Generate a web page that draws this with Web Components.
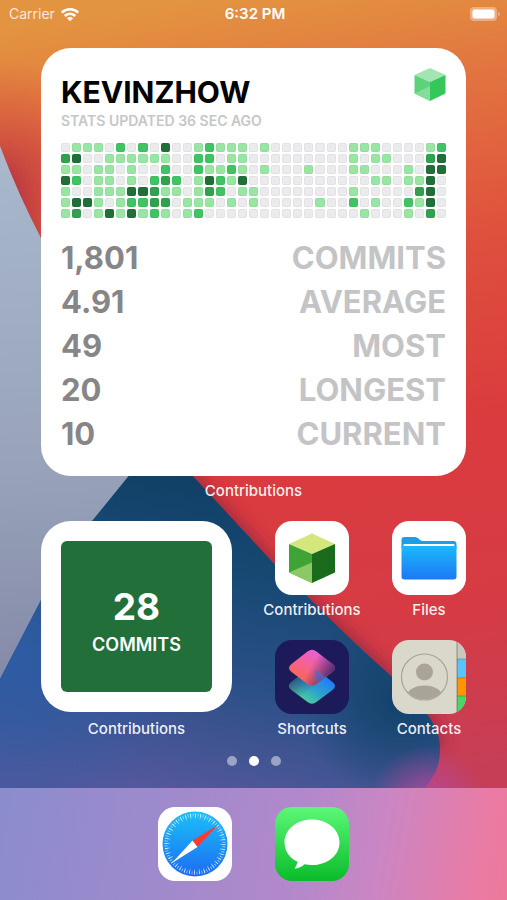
<!DOCTYPE html>
<html lang="en">
<head>
<meta charset="utf-8">
<meta name="viewport" content="width=device-width, initial-scale=1">
<title>Home screen</title>
<style>
html, body {
  margin: 0;
  min-height: 100%;
  font-family: Inter, "Liberation Sans", sans-serif;
}
</style>
</head>
<body>

<home-screen>
  <wall-paper slot="wallpaper"></wall-paper>
  <status-bar slot="status" carrier="Carrier" time="6:32 PM"></status-bar>

  <home-widget size="large" label="Contributions">
    <contribution-stats user="KEVINZHOW" updated="STATS UPDATED 36 SEC AGO">
      <stat-row value="1,801">COMMITS</stat-row>
      <stat-row value="4.91">AVERAGE</stat-row>
      <stat-row value="49">MOST</stat-row>
      <stat-row value="20">LONGEST</stat-row>
      <stat-row value="10">CURRENT</stat-row>
    </contribution-stats>
  </home-widget>

  <home-widget size="small" label="Contributions">
    <commit-count value="28">COMMITS</commit-count>
  </home-widget>
  <app-icon name="contributions">Contributions</app-icon>
  <app-icon name="files">Files</app-icon>
  <app-icon name="shortcuts">Shortcuts</app-icon>
  <app-icon name="contacts">Contacts</app-icon>

  <page-dots slot="dots" count="3" current="1"></page-dots>
  <app-dock slot="dock">
    <app-icon name="safari"></app-icon>
    <app-icon name="messages"></app-icon>
  </app-dock>
</home-screen>

<script>
class HomeScreen extends HTMLElement {
  constructor() {
    super();
    this.attachShadow({mode: 'open'}).innerHTML = `
      <style>
        :host { display: grid; min-height: 100vh; overflow: hidden; }
        /* wallpaper and content share one grid cell */
        ::slotted([slot=wallpaper]), .content { grid-area: 1 / 1; min-width: 0; }
        .content { display: flex; flex-direction: column; z-index: 1; }
        main {
          flex: 1;
          display: grid;
          grid-template-columns: repeat(4, minmax(0, 1fr));
          align-content: start;
          gap: 20px 43px;
          padding: 20px 41px 16px;
        }
      </style>
      <slot name="wallpaper"></slot>
      <div class="content">
        <slot name="status"></slot>
        <main><slot></slot></main>
        <slot name="dots"></slot>
        <slot name="dock"></slot>
      </div>
    `;
  }
}

class WallPaper extends HTMLElement {
  constructor() {
    super();
    this.attachShadow({mode: 'open'}).innerHTML = `
      <style>
        :host { display: block; contain: size; overflow: hidden; }
        svg { display: block; width: 100%; height: 100%; }
      </style>
      <svg viewBox="0 0 507 900" preserveAspectRatio="none" aria-hidden="true">
        <defs>
          <linearGradient id="warm" gradientUnits="userSpaceOnUse" x1="200" y1="0" x2="330" y2="900">
            <stop offset="0" stop-color="#e39440"/>
            <stop offset=".12" stop-color="#e27440"/>
            <stop offset=".3" stop-color="#df503d"/>
            <stop offset=".5" stop-color="#da3b3e"/>
            <stop offset=".7" stop-color="#d63b44"/>
            <stop offset=".88" stop-color="#c63e56"/>
          </linearGradient>
          <radialGradient id="ember" gradientUnits="userSpaceOnUse" cx="0" cy="190" r="130">
            <stop offset="0" stop-color="#b83044" stop-opacity=".9"/>
            <stop offset="1" stop-color="#d84a3a" stop-opacity="0"/>
          </radialGradient>
          <linearGradient id="grey" gradientUnits="userSpaceOnUse" x1="0" y1="150" x2="40" y2="680">
            <stop offset="0" stop-color="#a9b8cd"/>
            <stop offset=".6" stop-color="#98a3b9"/>
            <stop offset="1" stop-color="#8489a8"/>
          </linearGradient>
          <linearGradient id="blue" gradientUnits="userSpaceOnUse" x1="270" y1="470" x2="200" y2="800">
            <stop offset="0" stop-color="#103d62"/>
            <stop offset=".3" stop-color="#164872"/>
            <stop offset=".65" stop-color="#2c5088"/>
            <stop offset="1" stop-color="#55589c"/>
          </linearGradient>
          <radialGradient id="azure" gradientUnits="userSpaceOnUse" cx="10" cy="660" r="180">
            <stop offset="0" stop-color="#2e5ca4"/>
            <stop offset="1" stop-color="#2e5ca4" stop-opacity="0"/>
          </radialGradient>
          <radialGradient id="deep" gradientUnits="userSpaceOnUse" cx="400" cy="700" r="100">
            <stop offset="0" stop-color="#12436a"/>
            <stop offset="1" stop-color="#12436a" stop-opacity="0"/>
          </radialGradient>
          <radialGradient id="pink" gradientUnits="userSpaceOnUse" cx="428" cy="805" r="60">
            <stop offset="0" stop-color="#b8479c"/>
            <stop offset="1" stop-color="#b0489a" stop-opacity="0"/>
          </radialGradient>
          <filter id="soft" x="-20%" y="-20%" width="140%" height="140%">
            <feGaussianBlur stdDeviation="8"/>
          </filter>
          <path id="wedge" d="M-6 690 L0 679 L41 600 Q66 550 92 521 L140 462 Q160 440 178 460 L278 568 C320 608 352 642 390 675 C414 697 440 722 440 748 C440 776 428 778 420 800 V900 H-6 Z"/>
        </defs>
        <rect width="507" height="900" fill="url(#warm)"/>
        <rect width="250" height="350" fill="url(#ember)"/>
        <path d="M0 146 Q18 194 42 240 L150 440 V700 H0 Z" fill="#8e2840" opacity=".3" filter="url(#soft)"/>
        <path d="M0 146 Q18 194 42 240 L150 440 V700 H0 Z" fill="url(#grey)"/>
        <path d="M170 445 L278 562 C320 602 352 636 396 675 C422 697 444 722 444 748 L300 740 Z" fill="#7e2240" opacity=".6" filter="url(#soft)"/>
        <use href="#wedge" fill="url(#blue)"/>
        <use href="#wedge" fill="url(#azure)"/>
        <use href="#wedge" fill="url(#deep)"/>
        <rect x="340" y="730" width="167" height="170" fill="url(#pink)"/>
      </svg>
    `;
  }
}

class StatusBar extends HTMLElement {
  constructor() {
    super();
    this.attachShadow({mode: 'open'}).innerHTML = `
      <style>
        :host {
          display: grid;
          grid-template-columns: 1fr auto 1fr;
          align-items: center;
          height: 28px;
          padding: 0 6px 0 9px;
          color: #fff;
          font-size: 15px;
          line-height: 28px;
        }
        .carrier { display: flex; align-items: center; gap: 5px; color: #fffc; font-size: 14px; }
        .time { font-weight: 600; }
        .battery { justify-self: end; }
        svg { display: block; }
      </style>
      <span class="carrier">${this.getAttribute('carrier')}
        <svg width="20" height="15" viewBox="0 0 20 15" fill="none" stroke="#fff" stroke-width="2.600" aria-hidden="true">
          <path d="M1.800 5.600a11.600 11.600 0 0 1 16.400 0M4.800 9a7.300 7.300 0 0 1 10.400 0"/>
          <path d="M10 14.200 6.900 11.200a4.400 4.400 0 0 1 6.200 0Z" fill="#fff" stroke="none"/>
        </svg>
      </span>
      <span class="time">${this.getAttribute('time')}</span>
      <svg class="battery" width="31" height="14" viewBox="0 0 31 14" aria-hidden="true">
        <rect width="27" height="14" rx="4" fill="#fff" fill-opacity=".35"/>
        <rect x="2.500" y="2.500" width="22" height="9" rx="2" fill="#fff"/>
        <path d="M28 5v4q2-.5 2-2t-2-2Z" fill="#fff" opacity=".35"/>
      </svg>
    `;
  }
}

class HomeWidget extends HTMLElement {
  constructor() {
    super();
    this.attachShadow({mode: 'open'}).innerHTML = `
      <style>
        :host {
          display: flex;
          flex-direction: column;
          justify-content: space-between;
          gap: 5px;
        }
        :host([size=large]) { grid-column: span 4; }
        :host([size=small]) { grid-column: span 2; grid-row: span 2; }
        .card { background: #fff; border-radius: 30px; padding: 20px; }
        :host([size=small]) .card { aspect-ratio: 1; box-sizing: border-box; display: grid; }
        .label { color: #fffe; font-size: 15px; font-weight: 500; line-height: 20px; text-align: center; }
      </style>
      <div class="card"><slot></slot></div>
      <div class="label">${this.getAttribute('label')}</div>
    `;
  }
}

class ContributionStats extends HTMLElement {
  constructor() {
    super();
    // one digit per day, 0 (no commits) to 4 (most)
    const days = [
      '01110202040012111010000000111000012',
      '34001111110022011000000000101100034',
      '11011010020021121010001000110001044',
      '42011010232014214000000000001101140',
      '10011144311013201100000000100000340',
      '14410122330111010100000100201002140',
      '13014141210120000000000000010001030'
    ];
    const cells = days.join('').split('').map(level => `<i class="l${level}"></i>`).join('');
    this.attachShadow({mode: 'open'}).innerHTML = `
      <style>
        :host { display: block; }
        header { display: flex; justify-content: space-between; align-items: flex-start; }
        h1 { margin: 6px 0 0; font-size: 30px; font-weight: 700; line-height: 36px; color: #000; }
        p { margin: 3px 0 0; font-size: 14px; font-weight: 600; line-height: 16px; color: #c6c6c8; }
        .days {
          display: grid;
          grid-template-columns: repeat(${days[0].length}, 1fr);
          gap: 2px;
          margin: 14px 0 18px;
        }
        i { aspect-ratio: 1; border-radius: 2px; box-shadow: inset 0 0 0 1px #1b1f230a; }
        .l0 { background: #ebebed; }
        .l1 { background: #99e5a4; }
        .l2 { background: #40c463; }
        .l3 { background: #30a14e; }
        .l4 { background: #216e39; }
      </style>
      <header>
        <div>
          <h1>${this.getAttribute('user')}</h1>
          <p>${this.getAttribute('updated')}</p>
        </div>
        <svg width="32" height="33" viewBox="0 0 32 33" aria-hidden="true">
          <path d="M16 0 31.500 7 16 14 .500 7Z" fill="#a3e5b0"/>
          <path d="M.500 7 16 14V33L.500 25.500Z" fill="#5dd27a"/>
          <path d="M.500 25.500 16 18V33Z" fill="#86dd9a"/>
          <path d="M31.500 7 16 14V33L31.500 25.500Z" fill="#34c759"/>
        </svg>
      </header>
      <div class="days">${cells}</div>
      <slot></slot>
    `;
  }
}

class StatRow extends HTMLElement {
  constructor() {
    super();
    this.attachShadow({mode: 'open'}).innerHTML = `
      <style>
        :host {
          display: flex;
          justify-content: space-between;
          font-size: 31px;
          font-weight: 700;
          line-height: 44px;
          color: #c4c4c6;
        }
        b { font-weight: 700; color: #868688; }
      </style>
      <b>${this.getAttribute('value')}</b>
      <span><slot></slot></span>
    `;
  }
}

class CommitCount extends HTMLElement {
  constructor() {
    super();
    this.attachShadow({mode: 'open'}).innerHTML = `
      <style>
        :host {
          display: flex;
          flex-direction: column;
          align-items: center;
          justify-content: center;
          gap: 4px;
          padding-top: 8px;
          border-radius: 6px;
          background: #236f39;
          color: #fff;
        }
        b { font-size: 37px; font-weight: 700; line-height: 44px; }
        span { font-size: 18px; font-weight: 600; line-height: 24px; }
      </style>
      <b>${this.getAttribute('value')}</b>
      <span><slot></slot></span>
    `;
  }
}

// all drawn in a 74x74 box
const ICONS = {
  contributions: `
    <rect width="74" height="74" fill="#fff"/>
    <path d="M37 12.500 60 23 37 33 14 23Z" fill="#d4e77c"/>
    <path d="M14 23 37 33V62L14 51.500Z" fill="#3ea436"/>
    <path d="M14 51.500 37 41.500V62Z" fill="#8cc965"/>
    <path d="M60 23 37 33V62L60 51.500Z" fill="#1b6b1c"/>`,
  files: `
    <defs><linearGradient id="f" x2="0" y2="1">
      <stop stop-color="#1bb9fb"/><stop offset="1" stop-color="#1d78f5"/>
    </linearGradient></defs>
    <rect width="74" height="74" fill="#fff"/>
    <path d="M9.500 27V19q0-3 3-3H23q2 0 3.500 1.500l1 1q1.500 1.500 4 1.500H61.500q3 0 3 3v5Z" fill="#1d9fe8"/>
    <rect x="11.500" y="23" width="51" height="5" rx="1" fill="#fff"/>
    <path d="M9.500 25H64.500V55.500q0 3-3 3H12.500q-3 0-3-3Z" fill="url(#f)"/>`,
  shortcuts: `
    <defs>
      <linearGradient id="t" x1=".2" y1=".7" x2=".6" y2="0">
        <stop stop-color="#fb6462"/><stop offset="1" stop-color="#e85fdc"/>
      </linearGradient>
      <linearGradient id="v" x1=".5" y1=".4" x2=".95" y2=".6">
        <stop stop-color="#5a2a70" stop-opacity="0"/><stop offset="1" stop-color="#4b2a6c" stop-opacity=".95"/>
      </linearGradient>
      <linearGradient id="b" x1=".3" y1=".9" x2=".8" y2=".3">
        <stop stop-color="#4ccf9e"/><stop offset=".45" stop-color="#2fa4c8"/><stop offset="1" stop-color="#1e80fb"/>
      </linearGradient>
      <linearGradient id="w" x1="0" y1=".3" x2=".4" y2=".7">
        <stop stop-color="#2a3c68" stop-opacity=".9"/><stop offset="1" stop-color="#2a4a78" stop-opacity="0"/>
      </linearGradient>
      <linearGradient id="o" gradientUnits="userSpaceOnUse" x1="38" y1="44" x2="46" y2="34">
        <stop stop-color="#3a7ae0" stop-opacity="0"/><stop offset="1" stop-color="#3a70d8" stop-opacity=".75"/>
      </linearGradient>
      <path id="d" d="M32.500 11.500q4.500-3.400 9 0L57.500 24q5 4 0 8L41.500 44q-4.500 3.400-9 0L16.500 32q-5-4 0-8Z"/>
    </defs>
    <rect width="74" height="74" fill="#1c1a58"/>
    <use href="#d" y="18" fill="url(#b)"/>
    <use href="#d" y="18" fill="url(#w)"/>
    <use href="#d" fill="url(#t)"/>
    <use href="#d" fill="url(#v)"/>
    <path d="M41 29.500 50.500 37 41.500 44q-2 1.500-4.500 1.700Z" fill="url(#o)"/>`,
  contacts: `
    <defs><clipPath id="c"><circle cx="32.500" cy="37" r="22.500"/></clipPath></defs>
    <rect width="74" height="74" fill="#dad7cb"/>
    <rect x="65" width="9" height="19" fill="#c9c7bd"/>
    <rect x="65" y="19" width="9" height="19" fill="#5ac3fa"/>
    <rect x="65" y="38" width="9" height="18" fill="#ff9500"/>
    <rect x="65" y="56" width="9" height="18" fill="#4cd564"/>
    <path d="M65 19h9M65 38h9M65 56h9" stroke="#0003"/>
    <path d="M65 0v74" stroke="#0005"/>
    <g fill="#aaa39a">
      <circle cx="32.500" cy="32" r="8.500"/>
      <ellipse cx="32.500" cy="57" rx="18" ry="11.500" clip-path="url(#c)"/>
    </g>
    <circle cx="32.500" cy="37" r="23" fill="none" stroke="#aaa39a" stroke-width="1.200"/>`,
  safari: `
    <defs><linearGradient id="s" x2="0" y2="1">
      <stop stop-color="#1cc0f8"/><stop offset="1" stop-color="#1c6cf0"/>
    </linearGradient></defs>
    <rect width="74" height="74" fill="#fff"/>
    <circle cx="37" cy="37" r="32.500" fill="url(#s)"/>
    <circle cx="37" cy="37" r="29" fill="none" stroke="#fff" stroke-opacity=".6" stroke-width="3" stroke-dasharray=".8 1.731"/>
    <circle cx="37" cy="37" r="28" fill="none" stroke="#fff" stroke-opacity=".6" stroke-width="5" stroke-dasharray=".8 4.086"/>
    <path d="M60 18 34.500 33.500 39.500 40Z" fill="#fb3a34"/>
    <path d="M14 56 34.500 33.500 39.500 40Z" fill="#fff"/>`,
  messages: `
    <defs><linearGradient id="m" x2="0" y2="1">
      <stop stop-color="#5cf777"/><stop offset="1" stop-color="#0abc29"/>
    </linearGradient></defs>
    <rect width="74" height="74" fill="url(#m)"/>
    <path d="M37 12.500C21.500 12.500 9.500 22.500 9.500 35.500c0 8.500 5 15.500 13 19.300-.5 2.700-1.500 4.700-3 6.700 4 0 7.500-1.700 10-4.200 2.500.5 5 .8 7.500.8 15.500 0 27.500-9.800 27.500-22.600S52.500 12.500 37 12.500Z" fill="#fff"/>`
};

class AppIcon extends HTMLElement {
  constructor() {
    super();
    const name = this.getAttribute('name');
    this.attachShadow({mode: 'open'}).innerHTML = `
      <style>
        :host { display: block; }
        a {
          display: flex;
          flex-direction: column;
          align-items: center;
          gap: 5px;
          color: #fffe;
          text-decoration: none;
          font-size: 15px;
          font-weight: 500;
          line-height: 20px;
          white-space: nowrap;
        }
        svg { display: block; width: 74px; height: 74px; border-radius: 17px; }
      </style>
      <a href="#${name}" aria-label="${name}">
        <svg viewBox="0 0 74 74" aria-hidden="true">${ICONS[name]}</svg>
        <slot></slot>
      </a>
    `;
  }
}

class PageDots extends HTMLElement {
  constructor() {
    super();
    const current = Number(this.getAttribute('current'));
    let dots = '';
    for (let i = 0; i < Number(this.getAttribute('count')); i++) {
      dots += `<button aria-label="Page ${i + 1}" ${i === current ? 'aria-current="page"' : ''}></button>`;
    }
    this.attachShadow({mode: 'open'}).innerHTML = `
      <style>
        :host { display: flex; justify-content: center; gap: 12px; padding-bottom: 22px; }
        button { width: 10px; height: 10px; padding: 0; border: 0; border-radius: 50%; background: #fff7; }
        button[aria-current] { background: #fff; }
      </style>
      ${dots}
    `;
  }
}

class AppDock extends HTMLElement {
  constructor() {
    super();
    this.attachShadow({mode: 'open'}).innerHTML = `
      <style>
        :host {
          display: flex;
          justify-content: center;
          gap: 43px;
          padding: 19px 0;
          background: linear-gradient(100deg, #8b8ccd 0%, #a08acc 35%, #b488cb 60%, #ca86c4 74%, #ea7ba3 94%, #ee799c 100%);
        }
      </style>
      <slot></slot>
    `;
  }
}

customElements.define('home-screen', HomeScreen);
customElements.define('wall-paper', WallPaper);
customElements.define('status-bar', StatusBar);
customElements.define('home-widget', HomeWidget);
customElements.define('contribution-stats', ContributionStats);
customElements.define('stat-row', StatRow);
customElements.define('commit-count', CommitCount);
customElements.define('app-icon', AppIcon);
customElements.define('page-dots', PageDots);
customElements.define('app-dock', AppDock);
</script>
</body>
</html>
